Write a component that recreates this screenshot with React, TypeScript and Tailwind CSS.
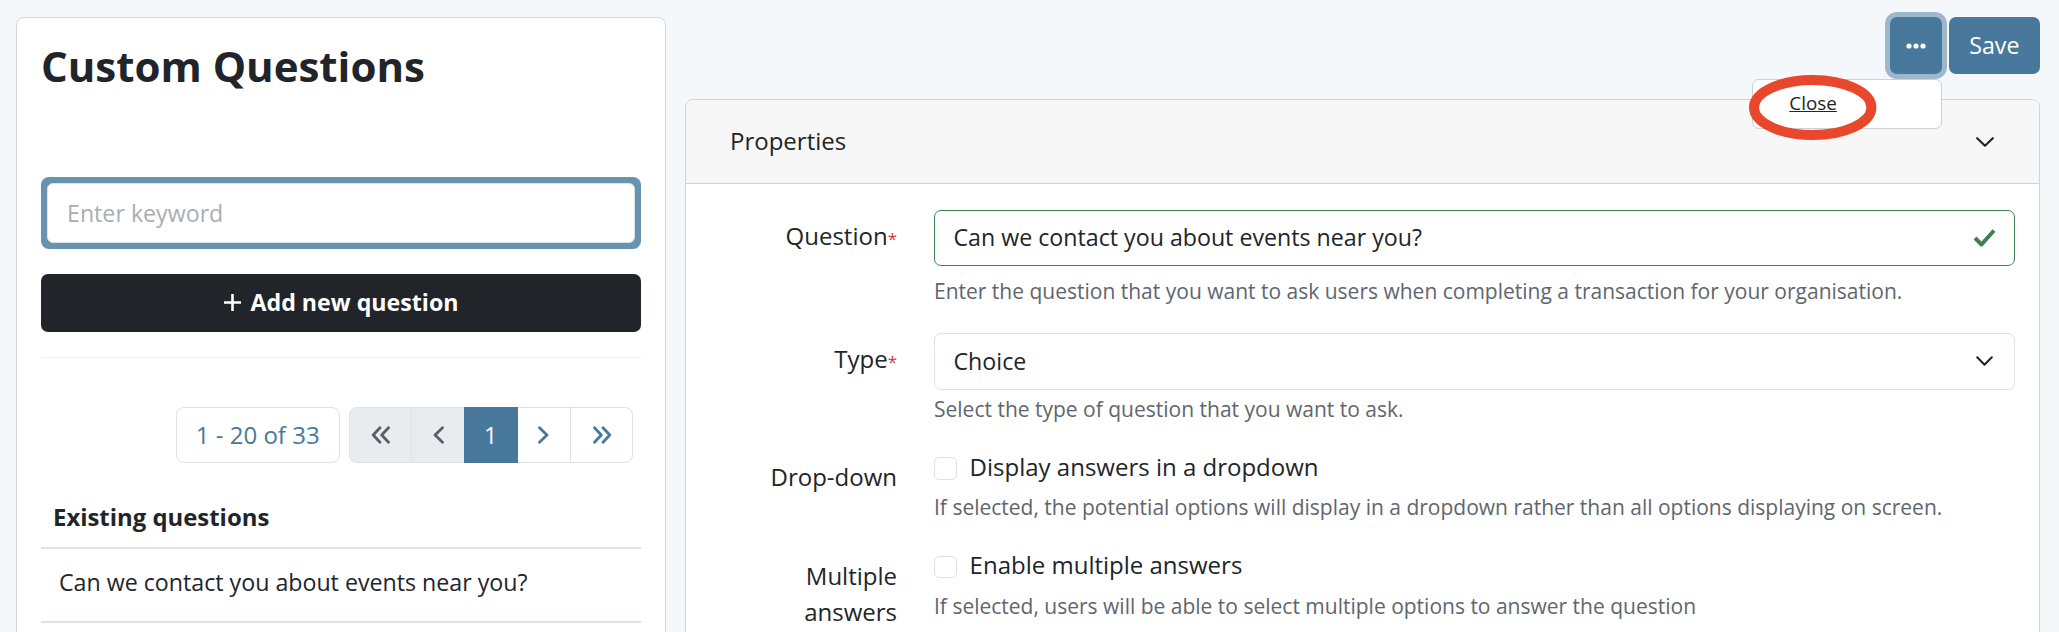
import React from "react";

function Chevron({ w = 18, h = 10, color = "#212529", sw = 2.2 }: { w?: number; h?: number; color?: string; sw?: number }) {
  return (
    <svg width={w} height={h} viewBox={`0 0 ${w} ${h}`} fill="none">
      <polyline points={`1.2,1.2 ${w / 2},${h - 1.2} ${w - 1.2},1.2`} stroke={color} strokeWidth={sw} strokeLinecap="round" strokeLinejoin="round" />
    </svg>
  );
}

function Dbl({ dir, color }: { dir: "l" | "r"; color: string }) {
  const p =
    dir === "l"
      ? ["M9 1.8 L2.2 9 L9 16.2", "M17.5 1.8 L10.7 9 L17.5 16.2"]
      : ["M2.5 1.8 L9.3 9 L2.5 16.2", "M11 1.8 L17.8 9 L11 16.2"];
  return (
    <svg width="20" height="18" viewBox="0 0 20 18" fill="none">
      {p.map((d, i) => (
        <path key={i} d={d} stroke={color} strokeWidth="2.8" strokeLinecap="round" strokeLinejoin="round" />
      ))}
    </svg>
  );
}

function Sgl({ dir, color }: { dir: "l" | "r"; color: string }) {
  const d = dir === "l" ? "M10.5 1.8 L3 9 L10.5 16.2" : "M2.5 1.8 L10 9 L2.5 16.2";
  return (
    <svg width="13" height="18" viewBox="0 0 13 18" fill="none">
      <path d={d} stroke={color} strokeWidth="2.8" strokeLinecap="round" strokeLinejoin="round" />
    </svg>
  );
}

function Req() {
  return <span className="text-[#dc3545] text-[17px]">*</span>;
}

export default function App() {
  return (
    <div className="min-h-screen bg-[#f5f8fa] flex items-start gap-[19px] pl-[16px] pr-[19px] pt-[17px] text-[#212529] text-[23.2px] leading-[34.8px] font-['Open_Sans',sans-serif] overflow-hidden h-[632px]">
      {/* Left panel */}
      <div className="w-[650px] shrink-0 h-[700px] bg-white border-[1.5px] border-[#d3d5d8] rounded-[8px] px-[24px] pt-[24px]">
        <h1 className="text-[42px] leading-[48.7px] font-bold">Custom Questions</h1>
        <div className="mt-[86px] bg-[#6893b0] rounded-[8px] p-[6px]">
          <input
            className="block w-full h-[60px] bg-white border-[1.5px] border-[#dee2e6] rounded-[6px] px-[19px] placeholder:text-[#a8aeb5] outline-none"
            placeholder="Enter keyword"
          />
        </div>
        <button className="mt-[25px] w-full h-[58px] bg-[#212529] rounded-[7px] text-white font-bold flex items-center justify-center gap-[8px]">
          <svg width="19" height="19" viewBox="0 0 19 19" fill="none">
            <path d="M9.5 1 V18 M1 9.5 H18" stroke="white" strokeWidth="2.6" />
          </svg>
          <span>Add new question</span>
        </button>
        <div className="mt-[25px] border-t border-[#f0f0f0]" />
        <div className="mt-[49px] flex justify-end pr-[8px] gap-[9.4px]">
          <div className="h-[56.6px] px-[19px] border-[1.5px] border-[#dee2e6] rounded-[8px] flex items-center text-[#48789b] text-[24px]">
            1 - 20 of 33
          </div>
          <div className="flex h-[56.6px]">
            <div className="w-[62px] h-full bg-[#e9ecef] border-[1.5px] border-r-0 border-[#dee2e6] rounded-l-[8px] flex items-center justify-center">
              <Dbl dir="l" color="#5a5f64" />
            </div>
            <div className="w-[53px] h-full bg-[#e9ecef] border-[1.5px] border-r-0 border-[#dee2e6] flex items-center justify-center">
              <Sgl dir="l" color="#5a5f64" />
            </div>
            <div className="w-[53.5px] h-full bg-[#48789b] text-white flex items-center justify-center">1</div>
            <div className="w-[52.5px] h-full bg-white border-[1.5px] border-r-0 border-l-0 border-[#dee2e6] flex items-center justify-center">
              <Sgl dir="r" color="#48789b" />
            </div>
            <div className="w-[63px] h-full bg-white border-[1.5px] border-[#dee2e6] rounded-r-[8px] flex items-center justify-center">
              <Dbl dir="r" color="#48789b" />
            </div>
          </div>
        </div>
        <div className="mt-[25.4px]">
          <div className="px-[12px] py-[11.6px] font-bold text-[23.9px] border-b-2 border-[#dee2e6]">Existing questions</div>
          <div className="pl-[18px] pt-[16.6px] pb-[21.3px] border-b-2 border-[#dee2e6]">
            Can we contact you about events near you?
          </div>
        </div>
      </div>

      {/* Right column */}
      <div className="flex-1 min-w-0">
        <div className="flex justify-end gap-[6.3px]">
          <div className="relative">
            <button className="w-[52px] h-[57px] rounded-[7px] bg-[#48789b] shadow-[0_0_0_5px_rgba(72,120,155,0.5)] flex items-center justify-center">
              <svg width="20" height="6" viewBox="0 0 20 6">
                <circle cx="3" cy="3" r="2.6" fill="white" />
                <circle cx="10" cy="3" r="2.6" fill="white" />
                <circle cx="17" cy="3" r="2.6" fill="white" />
              </svg>
            </button>
            <div className="absolute right-0 top-[62px] w-[190px] h-[50px] bg-white border-[1.5px] border-[#cdd0d4] rounded-[7px] z-10 pl-[36px] pt-[9px] text-[18.85px] leading-[28px]">
              <span className="underline">Close</span>
            </div>
            <svg className="absolute left-[-141.7px] top-[57.7px] z-20 pointer-events-none" width="128" height="65" viewBox="0 0 128 65" fill="none">
              <ellipse cx="63.7" cy="32.5" rx="58.7" ry="27.5" stroke="#e8472b" strokeWidth="10" />
            </svg>
          </div>
          <button className="w-[91.4px] h-[57px] rounded-[7px] bg-[#48789b] text-white">Save</button>
        </div>

        <div className="mt-[25px] h-[560px] bg-white border-[1.5px] border-[#d3d3d3] rounded-[8px] overflow-hidden">
          <div className="h-[84px] bg-[#f7f7f7] border-b-[1.5px] border-[#d0d0d0] flex items-center justify-between pl-[44px] pr-[45.5px]">
            <span className="text-[24px]">Properties</span>
            <Chevron w={18} h={10} />
          </div>
          <div className="pt-[25.5px] pl-[61px] pr-[24.5px]">
            {/* Question */}
            <div className="flex gap-[37px] mb-[27.2px]">
              <div className="w-[150px] shrink-0 text-right pt-[8.3px] leading-[36px] text-[24px]">
                Question<Req />
              </div>
              <div className="flex-1">
                <div className="h-[56px] border-[1.5px] border-[#3d8152] rounded-[7px] flex items-center justify-between pl-[18.5px] pr-[18px]">
                  <span>Can we contact you about events near you?</span>
                  <svg width="23" height="19" viewBox="0 0 23 19" fill="none">
                    <polyline points="2,10 8.5,16.5 21,2.5" stroke="#3d8152" strokeWidth="4" strokeLinejoin="round" />
                  </svg>
                </div>
                <div className="mt-[10px] text-[21px] leading-[30.45px] text-[#5f666d]">
                  Enter the question that you want to ask users when completing a transaction for your organisation.
                </div>
              </div>
            </div>
            {/* Type */}
            <div className="flex gap-[37px] mb-[25.4px]">
              <div className="w-[150px] shrink-0 text-right pt-[7.4px] leading-[36px] text-[24px]">
                Type<Req />
              </div>
              <div className="flex-1">
                <div className="h-[56.4px] border-[1.5px] border-[#dee2e6] rounded-[7px] flex items-center justify-between pl-[18.5px] pr-[21px]">
                  <span>Choice</span>
                  <Chevron w={17} h={10} sw={2} />
                </div>
                <div className="mt-[4.4px] text-[21px] leading-[30.45px] text-[#5f666d]">
                  Select the type of question that you want to ask.
                </div>
              </div>
            </div>
            {/* Drop-down */}
            <div className="flex gap-[37px] mb-[25.3px]">
              <div className="w-[150px] shrink-0 text-right pt-[9.7px] leading-[36px] text-[24px]">Drop-down</div>
              <div className="flex-1">
                <div className="flex items-start gap-[13px]">
                  <div className="mt-[7.4px] w-[22.6px] h-[22.6px] border-[1.5px] border-[#dee2e6] rounded-[5px] bg-white shrink-0" />
                  <span className="text-[24px]">Display answers in a dropdown</span>
                </div>
                <div className="mt-[7.9px] text-[21px] leading-[30.45px] text-[#5f666d]">
                  If selected, the potential options will display in a dropdown rather than all options displaying on screen.
                </div>
              </div>
            </div>
            {/* Multiple answers */}
            <div className="flex gap-[37px]">
              <div className="w-[150px] shrink-0 text-right pt-[9.7px] leading-[36px] text-[24px]">Multiple answers</div>
              <div className="flex-1">
                <div className="flex items-start gap-[13px]">
                  <div className="mt-[7.4px] w-[22.6px] h-[22.6px] border-[1.5px] border-[#dee2e6] rounded-[5px] bg-white shrink-0" />
                  <span className="text-[24px]">Enable multiple answers</span>
                </div>
                <div className="mt-[7.9px] text-[21px] leading-[30.45px] text-[#5f666d]">
                  If selected, users will be able to select multiple options to answer the question
                </div>
              </div>
            </div>
          </div>
        </div>
      </div>
    </div>
  );
}
